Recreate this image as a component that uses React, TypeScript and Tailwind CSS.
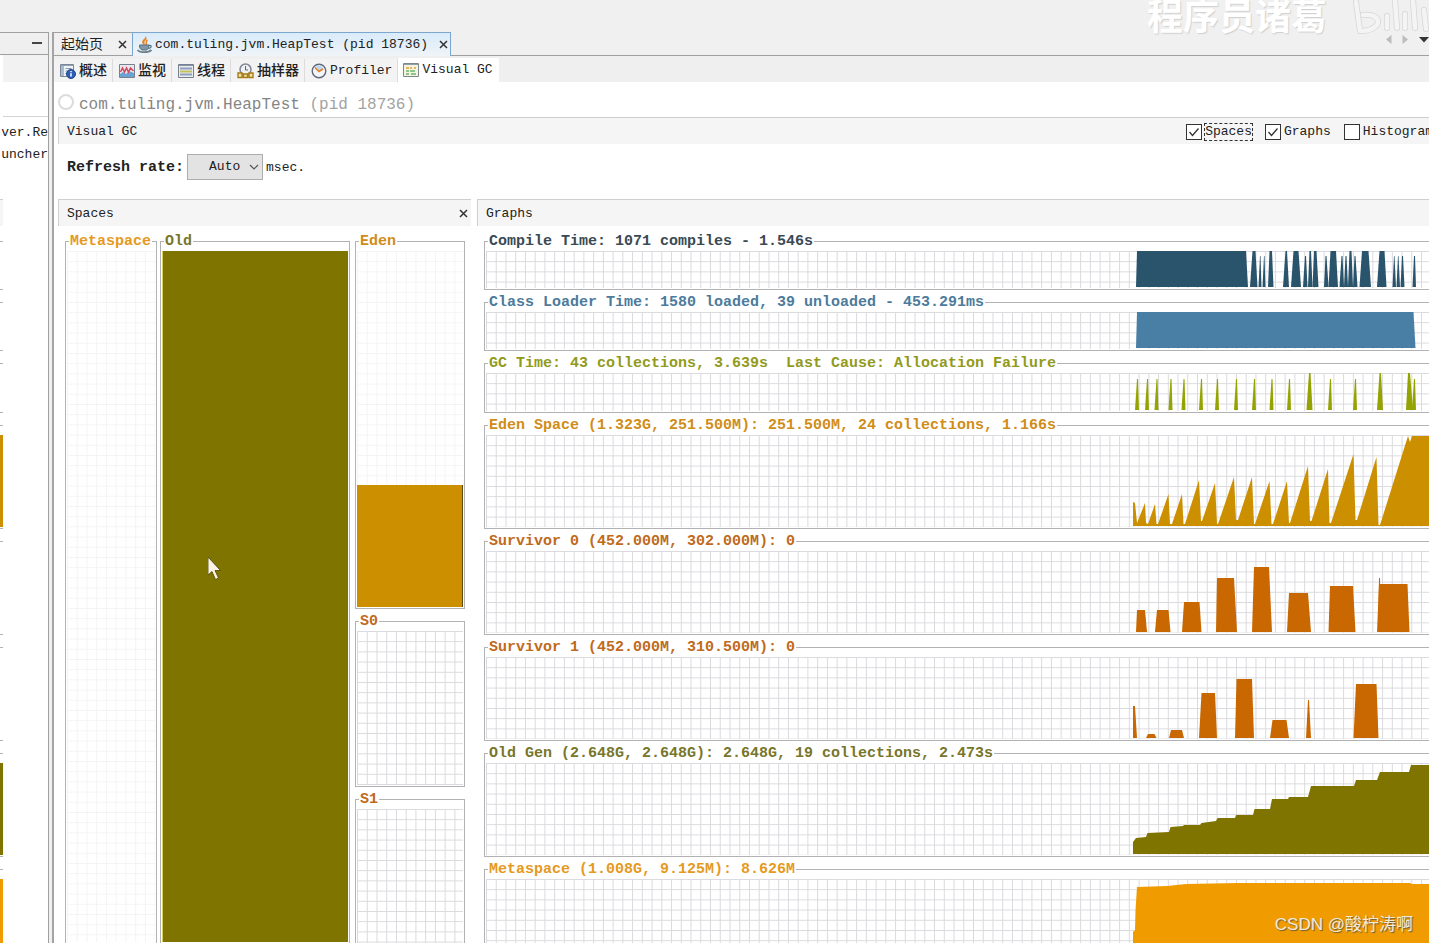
import { useId, type ReactNode } from "react";

// [bottom left, top left, top right, bottom right, height]
type Bar = [number, number, number, number, number];
// [x, height]
type Point = [number, number];

type Graph = {
  title: string;
  text: string;
  fill: string;
  plot: string;
  sliver: string;
  bars?: Bar[];
  area?: Point[];
};

const spike = (x: number, height = 31): Bar => [
  x - 2,
  x,
  x + 1,
  x + 2,
  height,
];

const graphs: Graph[] = [
  {
    title: "Compile Time: 1071 compiles - 1.546s",
    text: "text-[#3a4a54]",
    fill: "fill-[#2a546c]",
    plot: "h-[37px]",
    sliver: "",
    bars: [
      [16, 17, 126, 128, 36],
      [130, 132.5, 135.5, 137.5, 36],
      [138.5, 140, 140.5, 141.5, 31],
      [142.5, 144, 144.5, 145.5, 31],
      [148, 149.5, 152, 153.5, 36],
      [163, 165.5, 167, 169, 36],
      [171, 173.5, 178.5, 181, 36],
      [183, 185, 186, 187.5, 31],
      [188, 189.5, 191, 192.5, 36],
      [192.5, 194, 196.5, 198.5, 36],
      [204, 205.5, 206.5, 208.5, 31],
      [208.5, 210.5, 216, 218, 36],
      [219.5, 221.5, 222.5, 224, 31],
      [224, 225.5, 226.5, 228, 31],
      [228, 229.5, 231.5, 233, 36],
      [233, 234.5, 235.5, 237.5, 31],
      [239.5, 242, 248.5, 251, 36],
      [257, 259.5, 264.5, 266.5, 36],
      [272.5, 274, 274.5, 276, 31],
      [276.5, 278, 278.5, 280, 31],
      [280.5, 282, 283, 284.5, 31],
      [292.5, 294, 295, 296, 31],
    ],
  },
  {
    title: "Class Loader Time: 1580 loaded, 39 unloaded - 453.291ms",
    text: "text-[#4c7b9c]",
    fill: "fill-[#4a7fa5]",
    plot: "h-[37px]",
    sliver: "",
    bars: [[16, 17, 293.5, 295.5, 36]],
  },
  {
    title: "GC Time: 43 collections, 3.639s  Last Cause: Allocation Failure",
    text: "text-[#929a1c]",
    fill: "fill-[#94a300]",
    plot: "h-[38px]",
    sliver: "",
    bars: [
      spike(17),
      spike(27),
      spike(36.5),
      spike(50.5),
      spike(63.5),
      spike(81),
      spike(97),
      spike(116),
      spike(134),
      spike(151.5),
      spike(169),
      [186.5, 189, 190.5, 192.5, 37],
      spike(210),
      spike(235),
      [257, 259.5, 261, 263, 37],
      [286, 288, 290, 293, 37],
      spike(294),
    ],
  },
  {
    title: "Eden Space (1.323G, 251.500M): 251.500M, 24 collections, 1.166s",
    text: "text-[#d08d18]",
    fill: "fill-[#cc8f00]",
    plot: "h-[92px]",
    sliver: "bg-[#cc8f00]",
    area: [
      [13, 0],
      [13, 24],
      [15, 23],
      [17, 3],
      [25, 23],
      [26, 3],
      [28, 2],
      [35, 22],
      [36.5, 2],
      [38, 2],
      [48.5, 32],
      [50, 2],
      [52, 2],
      [62, 32],
      [63.5, 2],
      [65, 2],
      [79, 46],
      [81, 5],
      [82, 5],
      [95, 43],
      [97, 2],
      [98, 2],
      [114, 49],
      [116, 6],
      [118, 6],
      [132, 49],
      [134, 2],
      [135, 2],
      [149.5, 45],
      [151.5, 2],
      [153, 2],
      [167, 45],
      [169, 3],
      [170, 3],
      [188, 60],
      [190, 5],
      [191.5, 5],
      [208, 57],
      [209.5, 3],
      [211, 3],
      [233.5, 72],
      [235.5, 6],
      [237, 6],
      [256.5, 69],
      [258.5, 1],
      [260, 1],
      [288, 90],
      [290, 84],
      [292, 90],
      [309, 90],
      [309, 0],
    ],
  },
  {
    title: "Survivor 0 (452.000M, 302.000M): 0",
    text: "text-[#c06a1c]",
    fill: "fill-[#c96800]",
    plot: "h-[82px]",
    sliver: "",
    bars: [
      [16, 17, 25, 27, 22],
      [35, 37, 48.5, 50.5, 22],
      [62, 64, 79.5, 81.5, 30],
      [96, 97, 114, 117, 54],
      [132, 134, 149, 152, 65],
      [167, 169, 188, 191, 39],
      [208.5, 210, 233, 235.5, 46],
      [257, 259, 287.5, 289.5, 48],
      [258, 259, 260, 261, 54],
    ],
  },
  {
    title: "Survivor 1 (452.000M, 310.500M): 0",
    text: "text-[#c06a1c]",
    fill: "fill-[#c96800]",
    plot: "h-[82px]",
    sliver: "",
    bars: [
      [13, 13, 15, 17, 32],
      [26, 28, 34.5, 36.5, 4],
      [49, 51, 62, 64, 8],
      [79, 81.5, 95, 97, 45],
      [115, 116.5, 132, 134, 59],
      [150, 152.5, 166.5, 169, 18],
      [186, 188, 189, 191, 38],
      [233.5, 236, 256.5, 258.5, 54],
    ],
  },
  {
    title: "Old Gen (2.648G, 2.648G): 2.648G, 19 collections, 2.473s",
    text: "text-[#77762a]",
    fill: "fill-[#807400]",
    plot: "h-[92px]",
    sliver: "bg-[#807400]",
    area: [
      [13, 0],
      [13, 12],
      [16, 16],
      [26, 17],
      [27.5, 21],
      [49, 22],
      [50.5, 27],
      [63, 28],
      [64, 29],
      [80, 29],
      [81.5, 31],
      [96, 33],
      [97.5, 36],
      [115, 36],
      [116, 39],
      [133, 39],
      [134.5, 45],
      [150, 45],
      [152, 55],
      [168, 55],
      [169, 57],
      [188, 57],
      [191, 68],
      [234, 68],
      [236, 74],
      [257, 74],
      [260, 82],
      [289, 82],
      [291, 89],
      [309, 89],
      [309, 0],
    ],
  },
  {
    title: "Metaspace (1.008G, 9.125M): 8.626M",
    text: "text-[#e59a1e]",
    fill: "fill-[#f09c00]",
    plot: "h-[92px]",
    sliver: "bg-[#f09c00]",
    area: [
      [13, 0],
      [13, 38],
      [15, 40],
      [15.5, 60],
      [17, 83],
      [47, 84],
      [66, 86],
      [118, 87],
      [290, 87],
      [292, 86],
      [309, 86],
      [309, 0],
    ],
  },
];

function Grid({ stroke }: { stroke: string }) {
  const id = useId();
  return (
    <>
      <defs>
        <pattern
          id={id}
          width="9.74"
          height="10.2"
          patternUnits="userSpaceOnUse"
        >
          <path d="M.5 0V10.2M0 .5H9.74" fill="none" className={stroke} />
        </pattern>
      </defs>
      <rect width="100%" height="100%" fill={`url(#${id})`} />
    </>
  );
}

// Samples are drawn from the bottom right corner, newest on the right.
function Chart({ graph }: { graph: Graph }) {
  return (
    <svg className={`block w-full ${graph.plot}`} aria-hidden="true">
      <Grid stroke="stroke-[#dadade]" />
      <svg x="100%" y="100%" overflow="visible" className={graph.fill}>
        <g transform="translate(-309 -1)">
          {graph.bars?.map(([a, b, c, d, h], i) => (
            <path key={i} d={`M${a} 0L${b} ${-h}H${c}L${d} 0Z`} />
          ))}
          {graph.area && (
            <polygon
              points={graph.area.map(([x, h]) => `${x},${-h}`).join(" ")}
            />
          )}
        </g>
      </svg>
    </svg>
  );
}

function Group({
  title,
  text,
  className = "",
  children,
}: {
  title: string;
  text: string;
  className?: string;
  children: ReactNode;
}) {
  return (
    <fieldset
      className={`min-w-0 border border-[#b2b2b4] px-px pb-px ${className}`}
    >
      <legend
        className={`ml-0.5 h-5 px-px text-[15px] leading-[22px] font-bold whitespace-pre ${text}`}
      >
        {title}
      </legend>
      {children}
    </fieldset>
  );
}

function GridBox({ className, stroke }: { className: string; stroke: string }) {
  return (
    <svg className={`block w-full ${className}`} aria-hidden="true">
      <Grid stroke={stroke} />
    </svg>
  );
}

function PanelHeader({
  title,
  closable,
}: {
  title: string;
  closable?: boolean;
}) {
  return (
    <div className="flex h-[27px] items-center justify-between border-t border-l border-[#cfcfcf] bg-[#f5f5f5] pt-px pr-0.5 pl-2 text-[13px]">
      <h2>{title}</h2>
      {closable && <CloseButton label={`Close ${title}`} />}
    </div>
  );
}

function CloseButton({ label }: { label: string }) {
  return (
    <button type="button" aria-label={label} className="p-px">
      <svg width="9" height="9" viewBox="0 0 9 9">
        <path d="M1 1l7 7M8 1l-7 7" stroke="#333" strokeWidth="1.5" />
      </svg>
    </button>
  );
}

function JavaIcon() {
  return (
    <svg width="16" height="17" viewBox="0 0 16 17" fill="none">
      <path
        d="M8.5 0C9 3 3.500 4 5.500 7.500 6 8.500 7 8.500 7.500 9.500 8.500 7 6 6 9 4 10 3 9.500 1 8.500 0z"
        fill="#e8862a"
      />
      <path d="M10.500 4C8 5.500 10 7 9 9" stroke="#e8862a" strokeWidth="1.5" />
      <path
        d="M2.500 9h9.500c0 3-1 4.500-2.500 5h-4.500C3.500 13.500 2.500 12 2.500 9z"
        fill="#8499a8"
        stroke="#566d7d"
      />
      <path d="M12 9.500c3-.8 3 2.500-.8 3" stroke="#566d7d" strokeWidth="1.2" />
      <path d="M.5 14c2.500 3 11 3 14 0" stroke="#6c8190" strokeWidth="1.8" />
    </svg>
  );
}

function OverviewIcon() {
  return (
    <svg width="16" height="16" viewBox="0 0 16 16">
      <path d="M.5 1.500h13v12H.5z" fill="#eef3f8" stroke="#7b8794" />
      <path d="M1 2h3v11H1z" fill="#a9bccf" />
      <path d="M1 2.500h12" stroke="#8fa3b8" />
      <path d="M5.500 5.500h6M5.500 8h3M5.500 10.500h2" stroke="#8a9bac" />
      <circle cx="11" cy="11" r="4.5" fill="#2f5cb8" stroke="#23458c" />
      <path d="M11 10.200V13.500M11 8v1.300" stroke="#fff" strokeWidth="1.5" />
    </svg>
  );
}

function MonitorIcon() {
  return (
    <svg width="16" height="16" viewBox="0 0 16 16">
      <path d="M.5 1.500h15v13H.5z" fill="#e6eaf0" stroke="#77808c" />
      <path d="M1 11l3-2 3 2 3-3 5 2v4H1z" fill="#6ba3d4" />
      <path
        d="M1.500 9l2-4 2 4 2-4 2 4 2-4 3 3"
        fill="none"
        stroke="#d4485c"
        strokeWidth="1.5"
      />
    </svg>
  );
}

function ThreadsIcon() {
  return (
    <svg width="16" height="16" viewBox="0 0 16 16">
      <path d="M.5 1.500h15v13H.5z" fill="#e9ebef" stroke="#76808e" />
      <path d="M1 2.500h14" stroke="#8896a8" />
      <path d="M2 5.500h12M2 11.500h12" stroke="#8f9fc0" strokeWidth="2" />
      <path d="M2 8.500h12" stroke="#c2c25a" strokeWidth="2" />
    </svg>
  );
}

function SamplerIcon() {
  return (
    <svg width="17" height="16" viewBox="0 0 17 16" fill="none">
      <circle
        cx="8.5"
        cy="6.5"
        r="5.5"
        fill="#eef0f4"
        stroke="#808894"
        strokeWidth="1.5"
      />
      <path d="M8.500 3v4h2.500" stroke="#666" />
      <path
        d="M1 14.500V10h4v4.500zM6.500 14.500V11h4v3.500zM12 14.500V10h4v4.500z"
        fill="#f2e3a4"
        stroke="#a57c17"
        strokeWidth="1.4"
      />
    </svg>
  );
}

function ProfilerIcon() {
  return (
    <svg width="16" height="16" viewBox="0 0 16 16" fill="none">
      <circle
        cx="8"
        cy="8"
        r="6.8"
        fill="#f3f5f8"
        stroke="#5d6b7c"
        strokeWidth="1.4"
      />
      <path d="M8 8L5 3.500A5 5 0 0 1 12.500 6z" fill="#bcd6ef" />
      <path d="M4 4.500l4 4 4-2.500" stroke="#e0822c" strokeWidth="1.7" />
    </svg>
  );
}

function VisualGcIcon() {
  return (
    <svg width="16" height="16" viewBox="0 0 16 16">
      <path d="M.5 1.500h15v13H.5z" fill="#f6f4dc" stroke="#7d8790" />
      <path d="M1 2.500h14" stroke="#8da0b0" />
      <path d="M3 6h3M7 6h2M11 6h2" stroke="#e0a23c" strokeWidth="1.5" />
      <path
        d="M3 9h3M7 9h5M3 12h3M8 12h5"
        stroke="#6bb56f"
        strokeWidth="1.5"
      />
    </svg>
  );
}

const tabs = [
  { label: "概述", icon: <OverviewIcon />, size: "text-sm" },
  { label: "监视", icon: <MonitorIcon />, size: "text-sm" },
  { label: "线程", icon: <ThreadsIcon />, size: "text-sm" },
  { label: "抽样器", icon: <SamplerIcon />, size: "text-sm" },
  { label: "Profiler", icon: <ProfilerIcon />, size: "text-[13px] pt-px" },
];

function DocumentTabs() {
  return (
    <div className="flex h-6 text-[13px]">
      <div className="flex items-center gap-3.5 border-t border-b border-[#a0a0a0] pr-1 pl-[7px]">
        <button type="button" className="pt-px text-sm">
          起始页
        </button>
        <CloseButton label="Close 起始页" />
      </div>
      <div className="flex items-center gap-0.5 border border-b-0 border-[#7ba7cf] bg-linear-to-b from-[#d9ebfa] to-[#f0f4f8] pr-px pl-1">
        <JavaIcon />
        <button type="button" className="mr-2 pt-px whitespace-pre">
          com.tuling.jvm.HeapTest (pid 18736)
        </button>
        <CloseButton label="Close com.tuling.jvm.HeapTest" />
      </div>
      <div className="flex flex-1 items-start justify-end gap-2.5 border-b border-[#a0a0a0] pt-[3px]">
        <button type="button" aria-label="Scroll tabs left">
          <svg width="7" height="9" viewBox="0 0 7 9">
            <path d="M6.500 0v9L1 4.500z" fill="#bcbcbc" />
          </svg>
        </button>
        <button type="button" aria-label="Scroll tabs right">
          <svg width="7" height="9" viewBox="0 0 7 9">
            <path d="M.5 0v9L6 4.500z" fill="#bcbcbc" />
          </svg>
        </button>
        <button type="button" aria-label="Show opened documents">
          <svg width="10" height="9" viewBox="0 0 10 9">
            <path d="M0 2h10L5 7.500z" fill="#333" />
          </svg>
        </button>
      </div>
    </div>
  );
}

function ViewTabs() {
  return (
    <div className="flex h-[26px] items-stretch bg-[#efefef]">
      {tabs.map((t) => (
        <button
          type="button"
          key={t.label}
          className="mt-[3px] flex items-center gap-[3px] border-r border-[#dcdcdc] bg-[#f3f3f3] pr-[5px] pl-1.5 whitespace-nowrap"
        >
          {t.icon}
          <span className={`font-medium ${t.size}`}>{t.label}</span>
        </button>
      ))}
      <button
        type="button"
        className="mt-0.5 flex items-center gap-[3px] bg-white pr-1.5 pb-px pl-[5px] text-[13px] whitespace-nowrap"
      >
        <VisualGcIcon />
        Visual GC
      </button>
    </div>
  );
}

function Check({
  label,
  checked = false,
  focused = false,
}: {
  label: string;
  checked?: boolean;
  focused?: boolean;
}) {
  return (
    <label className="flex items-center gap-[3px]">
      <span className="relative block size-4">
        <input
          type="checkbox"
          defaultChecked={checked}
          className="peer block size-4 appearance-none border border-[#333] bg-white"
        />
        <svg
          className="pointer-events-none absolute inset-0 hidden peer-checked:block"
          viewBox="0 0 16 16"
        >
          <path
            d="M3.500 8l3 3.500L12.500 4.500"
            fill="none"
            stroke="#333"
            strokeWidth="1.3"
          />
        </svg>
      </span>
      <span
        className={
          focused ? "outline outline-dashed outline-[#333]" : undefined
        }
      >
        {label}
      </span>
    </label>
  );
}

function Toolbar() {
  return (
    <div className="flex h-[55px] items-start gap-[3px] pt-[10px] pl-[9px]">
      <label
        htmlFor="refresh-rate"
        className="text-[15px] leading-7 font-bold whitespace-nowrap"
      >
        Refresh rate:
      </label>
      <div className="relative">
        <select
          id="refresh-rate"
          className="block h-[26px] w-[76px] appearance-none border border-[#adadad] bg-[#e3e3e3] pl-[21px] text-[13px]"
        >
          <option>Auto</option>
        </select>
        <svg
          className="pointer-events-none absolute top-2 right-1"
          width="10"
          height="10"
          viewBox="0 0 10 10"
        >
          <path d="M1 3l4 4 4-4" fill="none" stroke="#555" strokeWidth="1.2" />
        </svg>
      </div>
      <span className="text-[13px] leading-7">msec.</span>
    </div>
  );
}

function SpacesPanel() {
  return (
    <section className="flex w-[413px] shrink-0 flex-col">
      <PanelHeader title="Spaces" closable />
      <div className="flex min-h-0 flex-1 pt-[5px] pr-1.5 pl-[7px]">
        <Group
          title="Metaspace"
          text="text-[#e59a1e]"
          className="mr-[3px] w-[92px] border-b-0"
        >
          <GridBox className="h-full" stroke="stroke-[#f4f4f4]" />
        </Group>
        <Group
          title="Old"
          text="text-[#77762a]"
          className="mr-[5px] flex-1 border-b-0"
        >
          <div className="h-full border-l border-[#d8d060] bg-[#807400]" />
        </Group>
        <div className="flex w-[110px] flex-col gap-0.5">
          <Group title="Eden" text="text-[#d08d18]">
            <GridBox className="h-[234px]" stroke="stroke-[#f4f4f4]" />
            <div className="h-[122px] border-r border-[#5f4a10] bg-[#cc8f00]" />
          </Group>
          <Group title="S0" text="text-[#c06a1c]">
            <GridBox className="h-[154px]" stroke="stroke-[#dadade]" />
          </Group>
          <Group
            title="S1"
            text="text-[#c06a1c]"
            className="flex-1 border-b-0"
          >
            <GridBox className="h-full" stroke="stroke-[#dadade]" />
          </Group>
        </div>
      </div>
    </section>
  );
}

function GraphsPanel() {
  return (
    <section className="min-w-0 flex-1">
      <PanelHeader title="Graphs" />
      <div className="flex flex-col gap-0.5 pt-[5px] pl-[7px]">
        {graphs.map((g) => (
          <Group
            key={g.title}
            title={g.title}
            text={g.text}
            className="border-r-0 pr-0"
          >
            <Chart graph={g} />
          </Group>
        ))}
      </div>
    </section>
  );
}

// Neighbouring window, mostly hidden behind the main one.
function Sidebar() {
  return (
    <aside className="flex w-[49px] shrink-0 flex-col overflow-hidden border-t border-r border-[#a0a0a0] bg-white text-[13px]">
      <div className="flex h-[22px] shrink-0 justify-end border-b border-[#a0a0a0] bg-[#efefef] pt-[9px] pr-1.5">
        <button
          type="button"
          aria-label="Minimize"
          className="h-0.5 w-2.5 bg-[#444]"
        />
      </div>
      <div className="ml-[3px] h-[27px] shrink-0 bg-[#f2f2f2]" />
      <div className="ml-[3px] h-[35px] shrink-0 border-b border-[#d4d4d4]" />
      <div className="flex h-[82px] shrink-0 flex-col items-end pt-[5px] leading-[22px]">
        <span>ver.Re</span>
        <span>uncher</span>
      </div>
      <div className="w-[3px]">
        <div className="mb-[5px] h-[27px] border-t border-[#cfcfcf] bg-[#f5f5f5]" />
        {graphs.map((g) => (
          <div key={g.title} className="mb-0.5 pt-2.5">
            <div className="border-y border-[#b2b2b4] pt-[9px] pb-px">
              <div className={`${g.plot} ${g.sliver}`} />
            </div>
          </div>
        ))}
      </div>
    </aside>
  );
}

function Watermarks() {
  return (
    <>
      <div className="pointer-events-none absolute -top-2 right-0 flex items-center gap-6 text-white">
        <span className="font-['Noto_Sans_CJK_SC',sans-serif] text-4xl leading-[42px] font-bold [text-shadow:1px_1px_1px_#cfcfcf]">
          程序员诸葛
        </span>
        <svg width="78" height="44" viewBox="0 0 78 44" fill="none">
          <g stroke="#d6d6d6" strokeWidth="6" strokeLinecap="round">
            <path d="M5 10l4 29M12 39c20-2 20-18 0-16M36 24v12M44 8l2 28M54 22v14M62 8l2 28M73 18l2 19" />
          </g>
          <g stroke="#f4f4f4" strokeWidth="4.5" strokeLinecap="round">
            <path d="M5 10l4 29M12 39c20-2 20-18 0-16M36 24v12M44 8l2 28M54 22v14M62 8l2 28M73 18l2 19" />
          </g>
        </svg>
      </div>
      <div className="pointer-events-none absolute right-4 bottom-1.5 font-['Liberation_Sans','Noto_Sans_CJK_SC',sans-serif] text-[17px] leading-6 text-[#f4ead6] [text-shadow:1px_1px_1px_#6b5a3a]">
        CSDN @酸柠涛啊
      </div>
      <svg
        className="pointer-events-none absolute top-[557px] left-[208px]"
        width="14"
        height="24"
        viewBox="0 0 14 24"
      >
        <path
          d="M0 0v18l4-3.500 3.500 8 3-1.500L7 13.500h5.500z"
          fill="#fdf6e6"
          stroke="#4b4300"
          strokeWidth=".8"
        />
      </svg>
    </>
  );
}

export default function App() {
  return (
    <div className="relative flex h-screen flex-col overflow-hidden bg-[#f0f0f0] font-['Liberation_Mono','Noto_Sans_CJK_SC',monospace] text-[#222]">
      <div className="h-8 shrink-0" />
      <div className="flex min-h-0 flex-1 gap-[3px]">
        <Sidebar />
        <main className="flex min-w-0 flex-1 flex-col border-l-2 border-[#a4a4a4]">
          <DocumentTabs />
          <ViewTabs />
          <div className="flex min-h-0 flex-1 flex-col bg-white pl-1">
            <div className="flex h-[35px] shrink-0 items-center gap-[5px] pt-2.5">
              <span className="mb-1.5 size-4 rounded-full border-2 border-[#dcdcdc]" />
              <h1 className="text-base whitespace-pre text-[#858585]">
                com.tuling.jvm.HeapTest{" "}
                <span className="text-[#a3a3a3]">(pid 18736)</span>
              </h1>
            </div>
            <div className="flex h-[27px] shrink-0 items-center justify-between border-t border-l border-[#cfcfcf] bg-[#f5f5f5] pt-px pl-2 text-[13px] leading-4">
              <h2>Visual GC</h2>
              <div className="-mr-1 flex gap-[13px]">
                <Check label="Spaces" checked focused />
                <Check label="Graphs" checked />
                <Check label="Histogram" />
              </div>
            </div>
            <Toolbar />
            <div className="flex min-h-0 flex-1 gap-1.5">
              <SpacesPanel />
              <GraphsPanel />
            </div>
          </div>
        </main>
      </div>
      <Watermarks />
    </div>
  );
}
